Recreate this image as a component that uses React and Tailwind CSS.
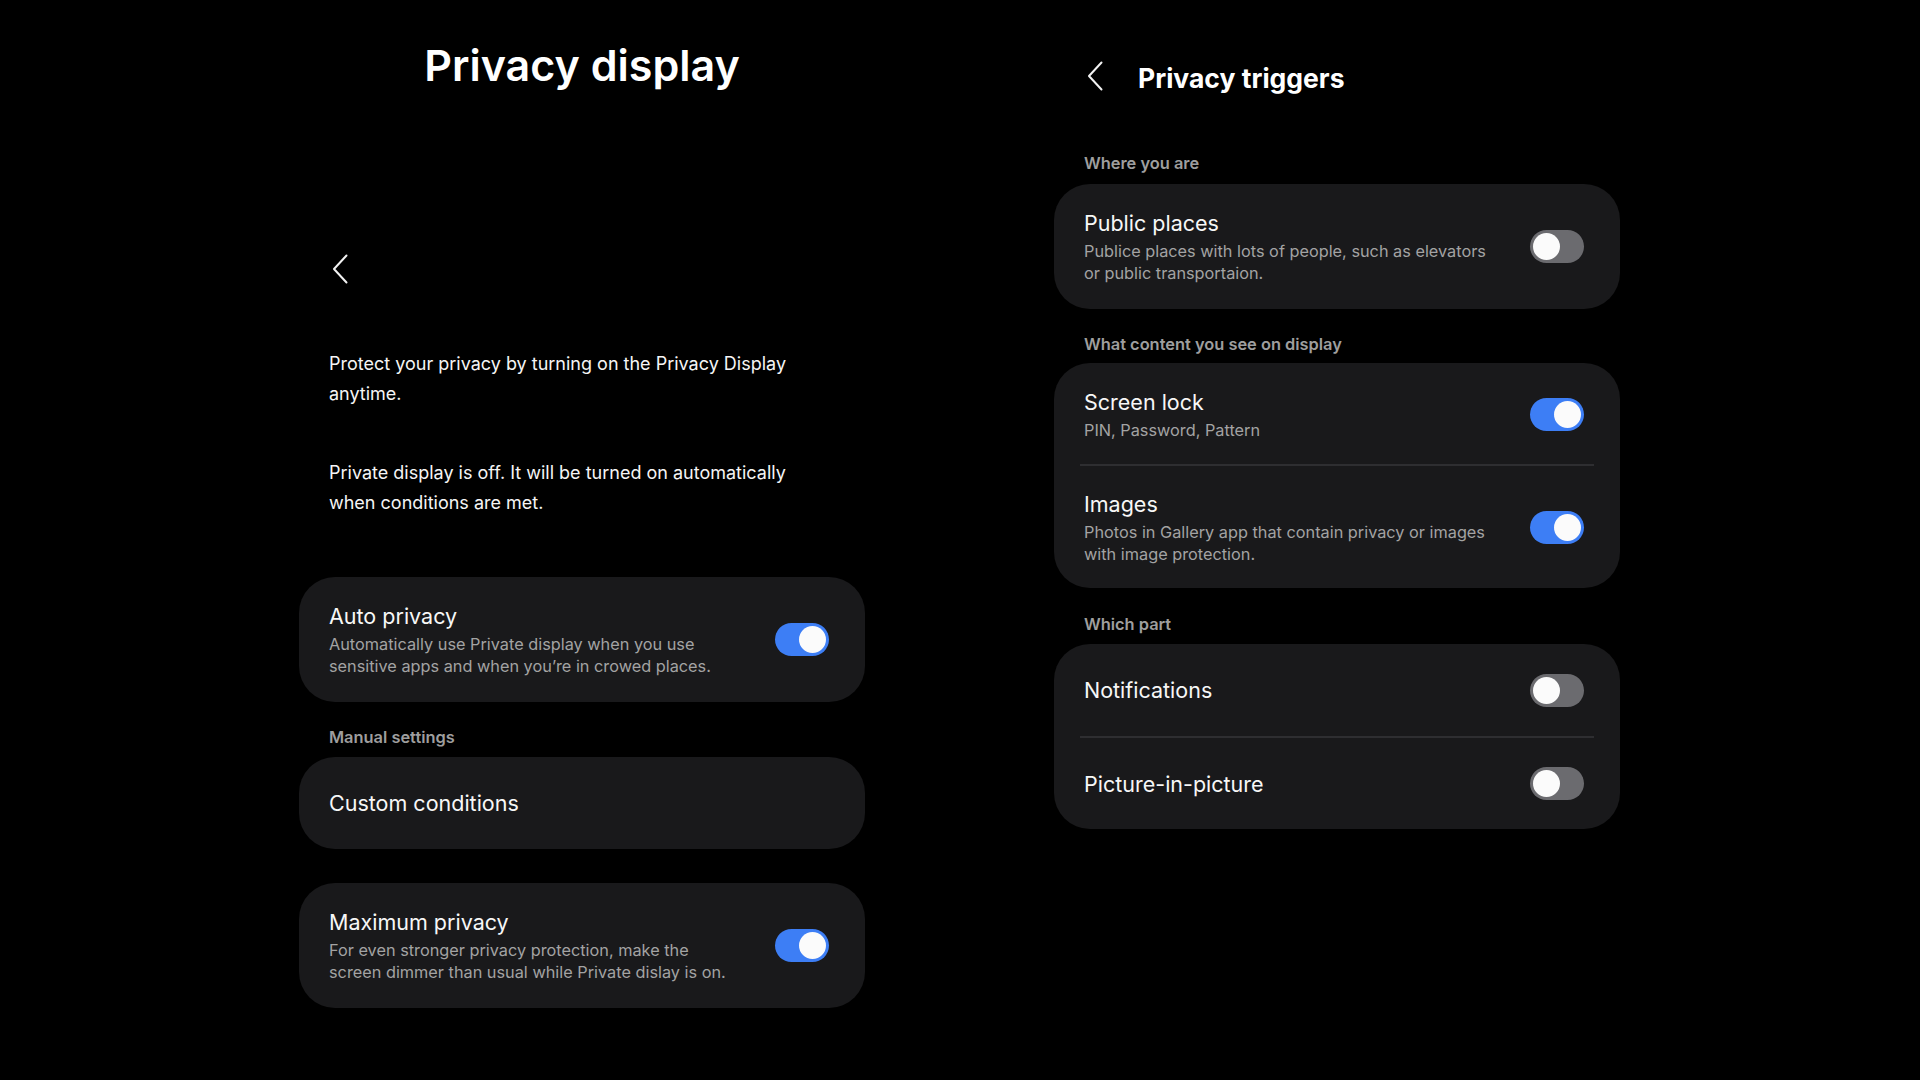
import React from 'react';

const BackArrow = () => (
  <svg width="16" height="30" viewBox="0 0 16 30" fill="none">
    <path d="M14.5 1.5 L2 15 L14.5 28.5" stroke="#f2f2f2" strokeWidth="2" strokeLinecap="round" strokeLinejoin="round" />
  </svg>
);

const Toggle = ({ on }) => (
  <div className={`relative w-[54px] h-[33px] rounded-full shrink-0 ${on ? 'bg-[#3d7ef5]' : 'bg-[#6b6b6f]'}`}>
    <div className={`absolute top-[3px] w-[27px] h-[27px] rounded-full bg-[#fbfbfb] ${on ? 'right-[3px]' : 'left-[3px]'}`} />
  </div>
);

function Row({ title, desc, on, className = '' }) {
  return (
    <div className={`flex items-center justify-between pl-[30px] pr-[36px] ${className}`}>
      <div className="max-w-[412px]">
        <div className="text-[21.5px] leading-[28px] text-[#f7f7f7]">{title}</div>
        {desc && <div className="mt-[3px] text-[16.3px] leading-[22px] text-[#a3a3a3]">{desc}</div>}
      </div>
      {on !== undefined && <Toggle on={on} />}
    </div>
  );
}

const Card = ({ className = '', children }) => (
  <div className={`rounded-[36px] bg-[#19191b] ${className}`}>{children}</div>
);

const Label = ({ className = '', children }) => (
  <div className={`pl-[30px] text-[16.4px] leading-[20px] font-semibold text-[#9e9e9e] ${className}`}>{children}</div>
);

const Divider = () => <div className="mx-[26px] h-[2px] bg-[#2e2e31]" />;

export default function App() {
  return (
    <div className="min-h-screen bg-black text-white flex justify-center gap-[189px] pr-px font-['Inter','Noto_Sans',sans-serif]">
      {/* Privacy display */}
      <div className="w-[566px] flex flex-col">
        <h1 className="pt-[39px] text-center text-[43px] leading-[52px] font-semibold">Privacy display</h1>
        <div className="mt-[163px] pl-[33px] h-[30px]"><BackArrow /></div>

        <div className="mt-[65px] pl-[30px] w-[530px] text-[18px] leading-[30px] text-[#f5f5f5]">
          <p>Protect your privacy by turning on the Privacy Display anytime.</p>
          <p className="mt-[49px]">Private display is off. It will be turned on automatically when conditions are met.</p>
        </div>

        <Card className="mt-[59px]">
          <Row className="py-[25px]" title="Auto privacy"
            desc="Automatically use Private display when you use sensitive apps and when you’re in crowed places." on />
        </Card>

        <Label className="mt-[25px]">Manual settings</Label>
        <Card className="mt-[10px] h-[92px] flex items-center">
          <Row title="Custom conditions" />
        </Card>

        <Card className="mt-[34px]">
          <Row className="py-[25px]" title="Maximum privacy"
            desc="For even stronger privacy protection, make the screen dimmer than usual while Private dislay is on." on />
        </Card>
      </div>

      {/* Privacy triggers */}
      <div className="w-[566px] flex flex-col">
        <div className="pt-[60px] flex items-start">
          <div className="ml-[33px] mt-[1px] h-[30px]"><BackArrow /></div>
          <h2 className="ml-[35px] text-[26.5px] leading-[36px] font-bold">Privacy triggers</h2>
        </div>

        <Label className="mt-[57px]">Where you are</Label>
        <Card className="mt-[11px]">
          <Row className="py-[25px]" title="Public places"
            desc="Publice places with lots of people, such as elevators or public transportaion." on={false} />
        </Card>

        <Label className="mt-[25px]">What content you see on display</Label>
        <Card className="mt-[9px]">
          <Row className="pt-[25px] pb-[23px]" title="Screen lock" desc="PIN, Password, Pattern" on />
          <Divider />
          <Row className="pt-[24px] pb-[23px]" title="Images"
            desc="Photos in Gallery app that contain privacy or images with image protection." on />
        </Card>

        <Label className="mt-[26px]">Which part</Label>
        <Card className="mt-[10px]">
          <Row className="h-[92px]" title="Notifications" on={false} />
          <Divider />
          <Row className="h-[91px]" title="Picture-in-picture" on={false} />
        </Card>
      </div>
    </div>
  );
}
